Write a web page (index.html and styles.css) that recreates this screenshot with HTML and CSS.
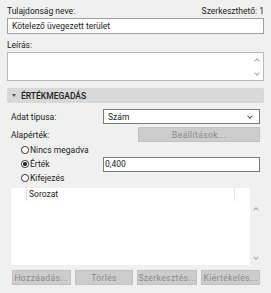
FILE: index.html
```html
<!DOCTYPE html>
<html lang="hu">
<head>
    <meta charset="UTF-8">
    <title>Tulajdonság</title>
    <link rel="stylesheet" href="styles.css">
</head>
<body>
    <div class="panel">
        <!-- Name -->
        <div class="top-row">
            <span>Tulajdonság neve:</span>
            <span>Szerkeszthető: 1</span>
        </div>
        <div class="field name-field">Kötelező üvegezett terület</div>

        <!-- Description -->
        <div class="label desc-label">Leírás:</div>
        <div class="field desc-field">
            <div class="scroll-arrows">
                <span class="arrow up"></span>
                <span class="arrow down"></span>
            </div>
        </div>

        <!-- Value section -->
        <div class="section-head">
            <span class="tri"></span>
            <span>ÉRTÉKMEGADÁS</span>
        </div>

        <div class="row first">
            <span class="row-label">Adat típusa:</span>
            <div class="field select">Szám<span class="chev"></span></div>
        </div>
        <div class="row">
            <span class="row-label">Alapérték:</span>
            <button class="btn settings" disabled>Beállítások...</button>
        </div>

        <div class="radios">
            <div class="radio-row">
                <span class="radio"></span><span>Nincs megadva</span>
            </div>
            <div class="radio-row">
                <span class="radio checked"></span><span class="radio-text">Érték</span>
                <div class="field value-field">0,400</div>
            </div>
            <div class="radio-row">
                <span class="radio"></span><span>Kifejezés</span>
            </div>
        </div>

        <!-- Series list -->
        <div class="list">
            <div class="list-body">
                <div class="list-head">
                    <span class="col-first"></span>
                    <span class="col-main">Sorozat</span>
                    <span class="col-last"></span>
                </div>
            </div>
            <div class="list-scroll">
                <span class="arrow up"></span>
                <span class="arrow down"></span>
            </div>
        </div>

        <div class="buttons">
            <button class="btn" disabled>Hozzáadás...</button>
            <button class="btn" disabled>Törlés</button>
            <button class="btn" disabled>Szerkesztés...</button>
            <button class="btn" disabled>Kiértékelés...</button>
        </div>
    </div>
</body>
</html>
```

FILE: styles.css
```css
body {
    margin: 0;
    background-color: #f0f0f0;
    font-family: Roboto, 'Noto Sans', sans-serif;
    font-size: 8.5px;
    color: #222;
}
.panel {
    padding: 4px 7px 0;
    width: 257px;
}
/* Name */
.top-row {
    display: flex;
    justify-content: space-between;
    height: 14px;
    line-height: 14px;
}
.field {
    box-sizing: border-box;
    background: #fff;
    border: 1px solid #a0a0a0;
    line-height: 14px;
    padding: 0 4px;
}
.name-field {
    height: 16px;
}
.label {
    line-height: 14px;
}
.desc-label {
    margin-top: 4px;
    height: 14px;
}
.desc-field {
    height: 29px;
    border-color: #b8b8b8;
    display: flex;
    justify-content: flex-end;
    padding: 0;
}
.scroll-arrows {
    width: 13px;
    display: flex;
    flex-direction: column;
    justify-content: space-between;
    align-items: center;
    padding: 4px 0 3px;
}
.arrow {
    width: 3px;
    height: 3px;
    border-left: 1px solid #a6a6a6;
    border-top: 1px solid #a6a6a6;
}
.arrow.up {
    transform: rotate(45deg);
    margin-top: 2px;
}
.arrow.down {
    transform: rotate(225deg);
    margin-bottom: 2px;
}
/* Section header */
.section-head {
    margin-top: 7px;
    height: 15px;
    background: #d8d8d8;
    border-radius: 2px;
    display: flex;
    align-items: center;
    gap: 5px;
    padding-left: 5px;
    font-weight: 500;
    color: #202020;
}
.tri {
    width: 0;
    height: 0;
    border-left: 2.5px solid transparent;
    border-right: 2.5px solid transparent;
    border-top: 3px solid #555;
}
.row {
    display: flex;
    align-items: center;
    justify-content: space-between;
    height: 15px;
    padding-left: 4px;
    padding-right: 4px;
}
.row.first {
    margin-top: 6px;
}
.row + .row {
    margin-top: 3px;
}
.select {
    width: 157px;
    height: 15px;
    border-color: #7a7a7a;
    border-width: 1.5px;
    display: flex;
    align-items: center;
    justify-content: space-between;
}
.chev {
    width: 3px;
    height: 3px;
    border-right: 1px solid #555;
    border-bottom: 1px solid #555;
    transform: rotate(45deg);
    margin-right: 3px;
    margin-top: -2px;
}
/* Buttons */
.btn {
    font-family: inherit;
    font-size: 8.5px;
    height: 15px;
    padding: 0;
    background: #cccccc;
    border: 1px solid #c2c2c2;
    color: #8a8a8a;
    border-radius: 0;
    letter-spacing: 0.4px;
}
.settings {
    width: 122px;
}
/* Radios */
.radios {
    margin-top: 1px;
}
.radio-row {
    display: flex;
    align-items: center;
    height: 14px;
    padding-right: 4px;
}
.radio {
    box-sizing: border-box;
    flex: none;
    width: 7.5px;
    height: 7.5px;
    border: 1px solid #333;
    border-radius: 50%;
    background: #fff;
    margin-left: 14px;
    margin-right: 1.5px;
    position: relative;
}
.radio.checked::after {
    content: "";
    position: absolute;
    left: 1px;
    top: 1px;
    width: 3.5px;
    height: 3.5px;
    border-radius: 50%;
    background: #222;
}
.radio-text {
    flex: 1;
}
.value-field {
    width: 157px;
    height: 15px;
    border-color: #7a7a7a;
    border-width: 1.5px;
    padding: 0 1px;
    display: flex;
    align-items: center;
}
/* List */
.list {
    margin: 3px 2px 0 4px;
    height: 77px;
    display: flex;
}
.list-body {
    flex: 1;
    background: #fff;
}
.list-head {
    display: flex;
    height: 13px;
    line-height: 13px;
}
.col-first {
    width: 15px;
    border-right: 1px solid #e3e3e3;
}
.col-main {
    flex: 1;
    padding-left: 2px;
}
.col-last {
    width: 15px;
    border-left: 1px solid #e3e3e3;
}
.list-scroll {
    width: 12px;
    display: flex;
    flex-direction: column;
    justify-content: space-between;
    align-items: center;
    padding: 18px 0 4px;
}
.buttons {
    display: grid;
    grid-template-columns: repeat(4, 1fr);
    gap: 4px;
    margin: 5px 4px 0 5px;
}
```
